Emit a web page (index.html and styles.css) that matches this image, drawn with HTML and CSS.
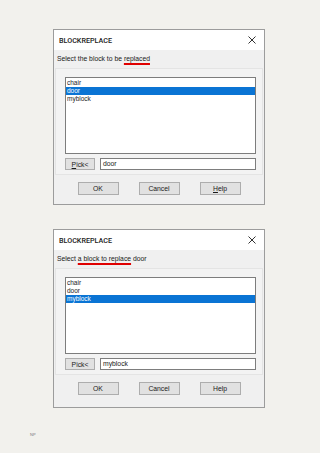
FILE: index.html
```html
<!DOCTYPE html>
<html lang="en">
<head>
    <meta charset="UTF-8">
    <meta name="viewport" content="width=device-width, initial-scale=1.0">
    <title>BLOCKREPLACE</title>
    <link rel="stylesheet" href="styles.css">
</head>
<body>
    <div class="dialog">
        <div class="title-bar">
            <span class="title">BLOCKREPLACE</span>
            <svg class="close" width="8" height="8" viewBox="0 0 8 8">
                <path d="M0.5 0.5 L7.5 7.5 M7.5 0.5 L0.5 7.5" stroke="#333" stroke-width="1"/>
            </svg>
        </div>
        <p class="prompt">Select the block to be <span class="mark">replaced</span></p>
        <div class="panel">
            <div class="list">
                <div class="item">chair</div>
                <div class="item selected">door</div>
                <div class="item">myblock</div>
            </div>
            <div class="pick-row">
                <button class="btn pick"><u>P</u>ick&lt;</button>
                <div class="field">door</div>
            </div>
        </div>
        <div class="buttons">
            <button class="btn">OK</button>
            <button class="btn">Cancel</button>
            <button class="btn"><u>H</u>elp</button>
        </div>
    </div>

    <div class="dialog second">
        <div class="title-bar">
            <span class="title">BLOCKREPLACE</span>
            <svg class="close" width="8" height="8" viewBox="0 0 8 8">
                <path d="M0.5 0.5 L7.5 7.5 M7.5 0.5 L0.5 7.5" stroke="#333" stroke-width="1"/>
            </svg>
        </div>
        <p class="prompt">Select <span class="mark">a block to replace</span> door</p>
        <div class="panel">
            <div class="list">
                <div class="item">chair</div>
                <div class="item">door</div>
                <div class="item selected">myblock</div>
            </div>
            <div class="pick-row">
                <button class="btn pick">Pick&lt;</button>
                <div class="field">myblock</div>
            </div>
        </div>
        <div class="buttons">
            <button class="btn">OK</button>
            <button class="btn">Cancel</button>
            <button class="btn">Help</button>
        </div>
    </div>

    <p class="page-no">NP</p>
</body>
</html>
```

FILE: styles.css
```css
body {
    margin: 0;
    padding: 29px 0 0 53px;
    background-color: #f2f1ed;
    font-family: "Liberation Sans", Arial, sans-serif;
    color: #1a1a1a;
}
.dialog {
    width: 210px;
    border: 1px solid #9c9c9c;
    background-color: #f0f0f0;
    padding-bottom: 9px;
    margin-bottom: 24px;
}
.dialog.second {
    padding-bottom: 12px;
}
.title-bar {
    height: 20px;
    background-color: white;
    display: flex;
    align-items: center;
    justify-content: space-between;
    padding: 0 8px 0 5px;
}
.title {
    font-family: Roboto, "Liberation Sans", sans-serif;
    font-size: 7.2px;
    font-weight: 500;
    color: #222;
}
.prompt {
    margin: 0;
    height: 18px;
    line-height: 17px;
    padding-left: 3px;
    font-size: 6.8px;
}
.mark {
    text-decoration: underline;
    text-decoration-color: #e00000;
    text-decoration-thickness: 2px;
    text-underline-offset: 2px;
}
.panel {
    margin: 0 1px;
    border: 1px solid #e4e4e4;
    background-color: #f3f3f3;
    padding: 8px 6px 4px 9px;
}
.list {
    height: 74px;
    border: 1px solid #7d7d7d;
    background-color: white;
    padding-top: 1px;
}
.item {
    height: 8px;
    line-height: 8px;
    font-size: 6.5px;
    padding-left: 1px;
}
.selected {
    background-color: #0a74d4;
    color: white;
}
.pick-row {
    display: flex;
    gap: 5px;
    margin-top: 4px;
}
.btn {
    height: 13px;
    width: 41px;
    padding: 0;
    border: 1px solid #adadad;
    background-color: #e1e1e1;
    font-family: "Liberation Sans", Arial, sans-serif;
    font-size: 6.8px;
    color: #1a1a1a;
}
.btn.pick {
    width: 30px;
    height: 12px;
}
.field {
    flex: 1;
    height: 12px;
    box-sizing: border-box;
    border: 1px solid #7d7d7d;
    background-color: white;
    font-size: 6.8px;
    line-height: 10px;
    padding-left: 2px;
}
.buttons {
    display: flex;
    justify-content: center;
    gap: 20px;
    margin-top: 7px;
}
.page-no {
    margin: 0 0 0 -23px;
    font-size: 4px;
    color: #777;
}
```
